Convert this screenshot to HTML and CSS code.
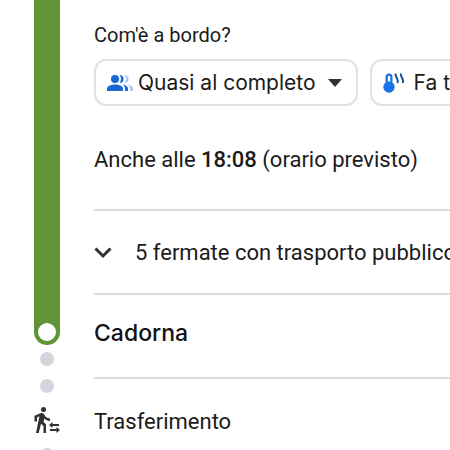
FILE: index.html
```
<!DOCTYPE html>
<html lang="it">
<head>
  <meta charset="UTF-8" />
  <meta name="viewport" content="width=device-width, initial-scale=1" />
  <title>Dettagli del percorso</title>
  <link rel="stylesheet" href="styles.css">
</head>
<body>

  <main class="trip">
    <section class="step">
      <div class="rail">
        <div class="line"></div>
      </div>
      <div class="info">
        <div class="ride">
          <p class="question">Com'è a bordo?</p>
          <div class="chips">
            <button class="chip" type="button">
              <svg class="people" width="26" height="16" viewBox="0 0 26 16" aria-hidden="true">
                <g fill="#a9c8f5">
                  <path d="M17.500 0a4 4 0 0 1 0 8 6 6 0 0 0 0-8z" />
                  <path d="M20.500 9.600c3 .6 5.500 1.800 5.500 3.900V16h-3v-2.500c0-1.600-1-2.900-2.500-3.900z" />
                </g>
                <g fill="#1967d2">
                  <circle cx="8" cy="4" r="4" />
                  <path d="M0 16v-2.500c0-2.800 5-4 8-4s8 1.200 8 4V16z" />
                  <path d="M12.500 0a4 4 0 0 1 0 8 6 6 0 0 0 0-8z" />
                  <path d="M15.500 9.600c3 .6 5.500 1.800 5.500 3.900V16h-3v-2.500c0-1.600-1-2.900-2.500-3.900z" />
                </g>
              </svg>
              Quasi al completo
              <svg class="caret" width="14" height="8" viewBox="0 0 14 8" aria-hidden="true">
                <path d="M0 0h14L7 8z" fill="#303134" />
              </svg>
            </button>
            <button class="chip" type="button">
              <svg class="thermo" width="22" height="20" viewBox="0 0 22 20" aria-hidden="true">
                <path d="M2.500 9.500V4a3.500 3.500 0 0 1 7 0v5.500a5.700 5.700 0 1 1-7 0z" fill="#1a73e8" />
                <path d="M4.800 4a1.200 1.200 0 0 1 2.400 0v4.500H4.800z" fill="#fff" />
                <path d="M12.700.5c-.8 2 .4 3 1.200 4.500s1.300 3 .5 5M18 .5c-.8 2 .4 3 1.200 4.500s1.300 3 .5 5" fill="none" stroke="#1b4f91" stroke-width="2" />
              </svg>
              Fa tanto caldo
            </button>
          </div>
          <p class="also">Anche alle <b>18:08</b> (orario previsto)</p>
        </div>
        <button class="stops" type="button">
          <svg width="18" height="12" viewBox="0 0 18 12" aria-hidden="true">
            <path d="M1.500 1.500 9 9l7.500-7.500" fill="none" stroke="#303134" stroke-width="3" />
          </svg>
          5 fermate con trasporto pubblico
        </button>
      </div>
    </section>

    <section class="step">
      <div class="rail">
        <div class="line line-end"></div>
        <span class="dot"></span>
      </div>
      <div class="info">
        <h2 class="station">Cadorna</h2>
      </div>
    </section>

    <section class="step">
      <div class="rail">
        <span class="dot"></span>
        <svg class="walk" width="26" height="27" viewBox="0 0 26 27" aria-hidden="true">
          <circle cx="9.500" cy="2.500" r="2.500" fill="#303134" />
          <path d="M6.500 6.200c1-.5 2.200-.4 3 .4.800.8 1.300 2.300 2.300 3.200 1.100 1 2.700 1.500 4.200 1.700v2.400c-2.300-.2-4.300-1-5.700-2.400l-.7 3.400 2.400 2.400V26H9.500v-7l-2.500-2.300L4.700 26H2L5.400 9.300 3 10.400V14.500H.5V8.700z" fill="#303134" />
          <path d="M25 18h-7M16 23h7" fill="none" stroke="#303134" stroke-width="2" />
          <path d="M18.500 15v6L15 18zM22.500 20v6l3.500-3z" fill="#303134" />
        </svg>
        <span class="dot"></span>
      </div>
      <div class="info">
        <p class="transfer">Trasferimento</p>
      </div>
    </section>
  </main>

</body>
</html>
```

FILE: styles.css
```
* {
  box-sizing: border-box;
}
body {
  margin: 0;
  height: 100vh;
  overflow: hidden;
  font-family: Roboto, sans-serif;
  font-size: 22px;
  line-height: 24px;
  color: #1b1b1b;
  background: #fff;
}
h2, p {
  margin: 0;
}
button {
  font: inherit;
  color: inherit;
  background: none;
  border: none;
  padding: 0;
  cursor: pointer;
}
svg {
  flex: none;
}

.step {
  display: grid;
  grid-template-columns: 94px minmax(0, 1fr);
}
.info {
  overflow: hidden;
}

/* Left rail with the line and the walking dots */
.rail {
  display: flex;
  flex-direction: column;
  align-items: center;
}
.line {
  flex: 1;
  width: 26px;
  background: #619436;
}
.line-end {
  flex: none;
  display: flex;
  align-items: flex-end;
  height: 50px;
  padding: 4px;
  border-radius: 0 0 13px 13px;
}
.line-end::after {
  content: "";
  width: 18px;
  height: 18px;
  border-radius: 50%;
  background: #fff;
}
.dot {
  width: 14px;
  height: 14px;
  border-radius: 50%;
  background: #d1d7dc;
}
.line-end + .dot {
  margin-top: 7px;
}
.walk {
  margin: 14px 0;
}

.ride {
  padding: 23px 0 37px;
  border-bottom: 2px solid #dadce0;
}
.question {
  font-size: 20px;
}
.also b {
  font-weight: 500;
}
.chips {
  display: flex;
  gap: 12px;
  margin: 12px 0 42px;
}
.chip {
  display: flex;
  flex: none;
  align-items: center;
  height: 47px;
  padding: 0 14px 0 11px;
  border: 2px solid #dfe1e4;
  border-radius: 12px;
  font-family: Inter, sans-serif;
  font-size: 21px;
  white-space: nowrap;
}
.people {
  margin-right: 5px;
}
.caret {
  margin-left: 12px;
}
.thermo {
  margin-right: 9px;
}
.stops {
  display: flex;
  align-items: center;
  gap: 23px;
  width: 100%;
  padding: 30px 0 28px;
  border-bottom: 2px solid #dadce0;
  white-space: nowrap;
}
.station {
  padding: 26px 0 32px;
  border-bottom: 2px solid #dadce0;
  font-family: Inter, sans-serif;
  font-size: 23px;
  font-weight: 500;
  color: #111;
}
.transfer {
  padding: 31px 0;
}
```
